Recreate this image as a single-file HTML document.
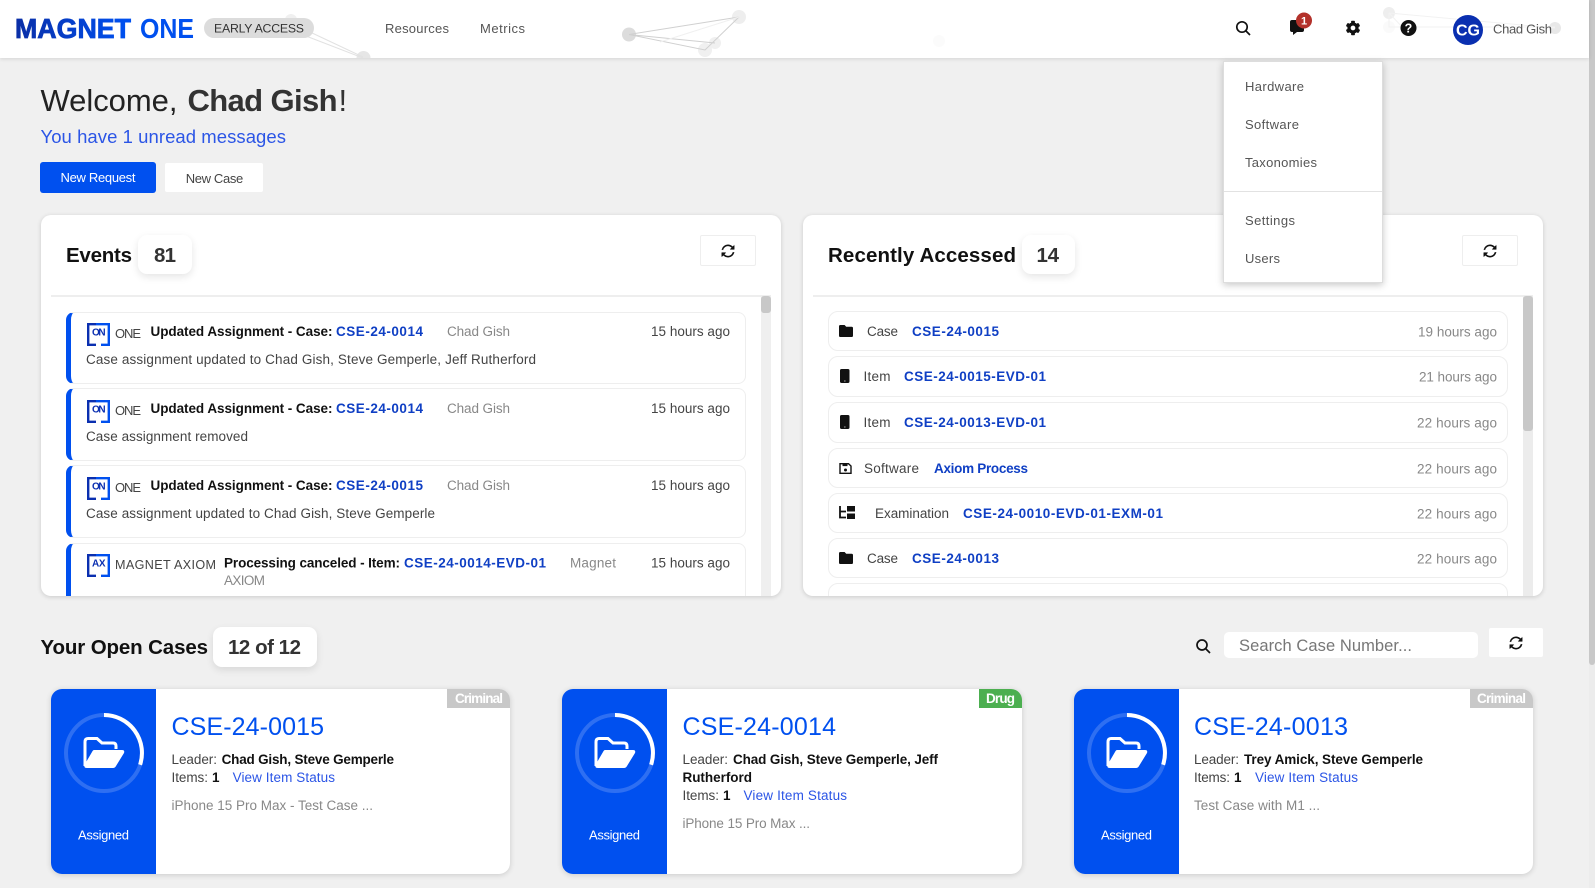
<!DOCTYPE html>
<html lang="en"><head><meta charset="utf-8"><title>Magnet One</title>
<style>
html,body{margin:0;padding:0;width:1595px;height:888px;overflow:hidden;background:#f0f0f0;font-family:"Liberation Sans",sans-serif}
.b{position:absolute;box-sizing:border-box}
.panel{background:#fff;border-radius:10px;box-shadow:0 1px 5px rgba(0,0,0,.16);overflow:hidden;width:740px;height:381px;top:215px}
.badge{background:#fff;border-radius:9px;box-shadow:0 3px 8px rgba(0,0,0,.1)}
.ev{left:25px;width:680px;background:#fff;border:1.5px solid #eee;border-left:5px solid #0050ef;border-radius:8px}
.rc{left:25px;width:680px;background:#fff;border:1.5px solid #eee;border-radius:10px}
.btn{background:#fff;border:1px solid #eee;border-radius:2px}
.card{background:#fff;top:689px;height:185px;border-radius:11px;box-shadow:0 1px 6px rgba(0,0,0,.16);overflow:hidden}
.blue{left:0;top:0;width:105px;height:185px;background:#0050ef}
.tag{top:0;right:0;height:19px}
svg{position:absolute;left:0;top:0}
text{font-family:"Liberation Sans",sans-serif;font-size:13.5px;fill:#555}
.bd{font-weight:700;fill:#111}
.lk{font-weight:700;fill:#0f3fc4}
.g{fill:#888}
.d{fill:#444}
.bl{fill:#2b55e6}
.w{fill:#fff}
.sm{font-size:13px}
.h{font-size:20.5px;font-weight:700;fill:#111}
.n{font-size:20.5px;font-weight:700;fill:#333}
.ct{font-size:25px;fill:#0050ef}
.tg{font-weight:700;fill:#fff}
.ic{font-weight:700;font-size:10px;fill:#0a2fb0}
</style></head>
<body>
<!-- scrollbar -->
<div class="b" style="left:1589px;top:0;width:6px;height:888px;background:#ececec"></div>
<div class="b" style="left:1589px;top:0;width:6px;height:665px;background:#c8c8c8;border-radius:0 0 3px 3px"></div>

<!-- header -->
<div class="b" style="left:0;top:0;width:1589px;height:58px;background:#fff;box-shadow:0 1px 4px rgba(0,0,0,.12)"></div>

<!-- buttons -->
<div class="b" style="left:40px;top:162px;width:116px;height:31px;background:#0050ef;border-radius:3px"></div>
<div class="b" style="left:165px;top:163px;width:98px;height:29px;background:#fff;border-radius:2px"></div>

<!-- events panel -->
<div class="b panel" style="left:41px">
  <div class="b" style="left:10px;top:80px;width:720px;height:1.5px;background:#eee"></div>
  <div class="b" style="left:720px;top:81px;width:10px;height:300px;background:#efefef"></div>
  <div class="b" style="left:720px;top:81px;width:10px;height:17px;background:#c8c8c8;border-radius:3px"></div>
  <div class="b ev" style="top:97px;height:71.5px"></div>
  <div class="b ev" style="top:173px;height:72.5px"></div>
  <div class="b ev" style="top:250px;height:72.5px"></div>
  <div class="b ev" style="top:328px;height:72px"></div>
  <div class="b btn" style="left:659px;top:20px;width:56px;height:31px"></div>
</div>

<!-- recent panel -->
<div class="b panel" style="left:803px">
  <div class="b" style="left:10px;top:80px;width:720px;height:1.5px;background:#eee"></div>
  <div class="b" style="left:720px;top:81px;width:10px;height:300px;background:#ececec"></div>
  <div class="b" style="left:720px;top:81px;width:10px;height:135px;background:#c8c8c8;border-radius:3px"></div>
  <div class="b rc" style="top:96px;height:40px"></div>
  <div class="b rc" style="top:141px;height:41px"></div>
  <div class="b rc" style="top:187px;height:41px"></div>
  <div class="b rc" style="top:233px;height:40px"></div>
  <div class="b rc" style="top:278px;height:40px"></div>
  <div class="b rc" style="top:323px;height:40px"></div>
  <div class="b rc" style="top:368px;height:40px"></div>
  <div class="b btn" style="left:659px;top:20px;width:56px;height:31px"></div>
</div>

<!-- badges -->
<div class="b badge" style="left:138px;top:235px;width:54px;height:39px"></div>
<div class="b badge" style="left:1022px;top:235px;width:53px;height:39px"></div>
<div class="b badge" style="left:213px;top:627px;width:104px;height:40px"></div>

<!-- search / refresh -->
<div class="b" style="left:1224px;top:632px;width:254px;height:26px;background:#fff;border-radius:5px"></div>
<div class="b" style="left:1489px;top:628px;width:54px;height:29px;background:#fff;border-radius:2px"></div>

<!-- case cards -->
<div class="b card" style="left:51px;width:459px"><div class="b blue"></div><div class="b tag" style="width:63px;background:#c8c8c8"></div></div>
<div class="b card" style="left:562px;width:460px"><div class="b blue"></div><div class="b tag" style="width:43px;background:#4caf50"></div></div>
<div class="b card" style="left:1074px;width:459px"><div class="b blue"></div><div class="b tag" style="width:63px;background:#c8c8c8"></div></div>

<!-- dropdown -->
<div class="b" style="left:1223px;top:61px;width:160px;height:222px;background:#fff;border:1px solid #ddd;box-shadow:0 2px 7px rgba(0,0,0,.22)"></div>
<div class="b" style="left:1224px;top:191px;width:158px;height:1px;background:#e2e2e2"></div>

<svg width="1595" height="888" viewBox="0 0 1595 888" xmlns="http://www.w3.org/2000/svg">
<defs>
  <linearGradient id="lg" gradientUnits="userSpaceOnUse" x1="15" y1="0" x2="125" y2="0"><stop offset="0" stop-color="#0a2ea6"/><stop offset="1" stop-color="#0050ef"/></linearGradient>
  <clipPath id="hd"><rect x="0" y="0" width="1589" height="58"/></clipPath>
  <path id="sync" stroke="#fff" stroke-width="22" d="M370.72 133.28C339.458 104.008 298.888 87.962 255.848 88c-77.458.068-144.328 53.178-162.791 126.85-1.344 5.363-6.122 9.15-11.651 9.15H24.103c-7.498 0-13.194-6.807-11.807-14.176C33.933 94.924 134.813 8 256 8c66.448 0 126.791 26.136 171.315 68.685L463.03 40.97C478.149 25.851 504 36.559 504 57.941V192c0 13.255-10.745 24-24 24H345.941c-21.382 0-32.09-25.851-16.971-40.971l41.75-41.749zM32 296h134.059c21.382 0 32.09 25.851 16.971 40.971l-41.75 41.75c31.262 29.273 71.835 45.319 114.876 45.28 77.418-.07 144.315-53.144 162.787-126.849 1.344-5.363 6.122-9.15 11.651-9.15h57.304c7.498 0 13.194 6.807 11.807 14.176C478.067 417.076 377.187 504 256 504c-66.448 0-126.791-26.136-171.315-68.685L48.97 471.03C33.851 486.149 8 475.441 8 454.059V320c0-13.255 10.745-24 24-24z"/>
  <g id="brk" fill="none" stroke-width="2.4"><path d="M9 1.2H1.2V21.8H9" stroke="#0a2fb0"/><path d="M9 1.2H21.8V21.8H14" stroke="#0050ef"/></g>
  <path id="fld" d="M1.4 0H5.6L7.2 1.8H12.6Q14 1.8 14 3.2V10.6Q14 12 12.6 12H1.4Q0 12 0 10.6V1.4Q0 0 1.4 0Z" fill="#111"/>
  <g id="ph"><rect x="0" y="0" width="9.5" height="14" rx="1.6" fill="#111"/><rect x="4" y="11.4" width="1.6" height="1.2" fill="#888"/></g>
  <g id="ring"><circle cx="104" cy="753" r="38" fill="none" stroke="#fff" stroke-opacity=".18" stroke-width="4"/>
    <path d="M104 715A38 38 0 0 1 140.1 764.7" fill="none" stroke="#fff" stroke-width="4"/>
    <path d="M85 766V742Q85 738.5 88 738.5H97L102 743H113Q116 743 116 746V749" fill="none" stroke="#fff" stroke-width="3"/>
    <path d="M94 750H122Q125 750 124 753L116 766Q115 768 113 768H87Q83 768 85 764L92 752Q93 750 94 750Z" fill="#fff"/>
  </g>
</defs>

<!-- network decoration -->
<g clip-path="url(#hd)">
  <circle cx="291" cy="20" r="6" fill="#f0f0f0"/>
  <circle cx="363.5" cy="58" r="7" fill="#e6e6e6"/>
  <path d="M310 32L363 57M306 36L363 58" stroke="#e2e2e2" stroke-width="1" fill="none"/>
  <circle cx="629" cy="34.5" r="7" fill="#dcdcdc"/><circle cx="739" cy="17" r="7" fill="#eee"/><circle cx="715" cy="43" r="6" fill="#f0f0f0"/><circle cx="705" cy="50" r="7" fill="#f0f0f0"/>
  <path d="M629 34.5L739 17M629 34.5L715 43M629 34.5L705 50L739 17" stroke="#d0d0d0" stroke-width="1" fill="none"/>
  <path d="M660 42L739 17" stroke="#f0f0f0" stroke-width="1" fill="none"/>
  <circle cx="939" cy="41" r="6" fill="#fbfbfb"/>
  <circle cx="1389" cy="13" r="6" fill="#eee"/><circle cx="1389" cy="27" r="6" fill="#fafafa"/><circle cx="1555" cy="28" r="6" fill="#e8e8e8"/>
  <path d="M1389 13L1555 28M1389 13V27H1555M1389 13L1405 30" stroke="#f2f2f2" stroke-width="1" fill="none"/>
</g>

<!-- logo & nav -->
<text x="15" y="38" textLength="116" lengthAdjust="spacingAndGlyphs" style="font-size:27.5px;font-weight:700;fill:url(#lg);stroke:url(#lg);stroke-width:.8">MAGNET</text>
<text x="140" y="38" textLength="54" lengthAdjust="spacingAndGlyphs" style="font-size:27.5px;font-weight:700;fill:#0050ef">ONE</text>
<rect x="204" y="18" width="110" height="20" rx="10" fill="#dcdcdc"/>
<text x="214" y="32.5" textLength="90" style="fill:#333;font-size:12.3px">EARLY ACCESS</text>
<text x="385" y="33" textLength="64" class="sm">Resources</text>
<text x="480" y="33" textLength="45" class="sm">Metrics</text>

<!-- header icons -->
<g fill="none" stroke="#111" stroke-width="1.7"><circle cx="1242" cy="27" r="5.2"/><path d="M1246 31L1250 35"/></g>
<path d="M1292 20H1302Q1304 20 1304 22V30Q1304 32 1302 32H1297L1293 35V32H1292Q1290 32 1290 30V22Q1290 20 1292 20Z" fill="#111"/>
<circle cx="1304" cy="20.5" r="8" fill="#b3312a"/>
<text x="1304" y="24.5" text-anchor="middle" class="tg" style="font-size:11px">1</text>
<g transform="translate(1345.5 20.5) scale(.0293)"><path fill="#111" d="M487.4 315.7l-42.6-24.6c4.3-23.2 4.3-47 0-70.2l42.6-24.6c4.9-2.8 7.1-8.6 5.5-14-11.1-35.6-30-67.8-54.7-94.6-3.8-4.1-10-5.1-14.8-2.3L380.8 110c-17.9-15.4-38.5-27.3-60.8-35.1V25.8c0-5.6-3.9-10.5-9.4-11.7-36.7-8.2-74.3-7.8-109.2 0-5.5 1.2-9.4 6.1-9.4 11.7V75c-22.2 7.9-42.8 19.8-60.8 35.1L88.7 85.5c-4.9-2.8-11-1.9-14.8 2.3-24.7 26.7-43.6 58.9-54.7 94.6-1.7 5.4.6 11.2 5.5 14L67.3 221c-4.3 23.2-4.3 47 0 70.2l-42.6 24.6c-4.9 2.8-7.1 8.6-5.5 14 11.1 35.6 30 67.8 54.7 94.6 3.8 4.1 10 5.1 14.8 2.3l42.6-24.6c17.9 15.4 38.5 27.3 60.8 35.1v49.2c0 5.6 3.9 10.5 9.4 11.7 36.7 8.2 74.3 7.8 109.2 0 5.5-1.2 9.4-6.1 9.4-11.7v-49.2c22.2-7.9 42.8-19.8 60.8-35.1l42.6 24.6c4.9 2.8 11 1.9 14.8-2.3 24.7-26.7 43.6-58.9 54.7-94.6 1.5-5.5-.7-11.3-5.6-14.1zM256 336c-44.1 0-80-35.9-80-80s35.9-80 80-80 80 35.9 80 80-35.9 80-80 80z"/></g>
<circle cx="1408.5" cy="28" r="8" fill="#111"/>
<text x="1408.5" y="32.5" text-anchor="middle" class="tg" style="font-size:12.5px">?</text>
<circle cx="1468" cy="30" r="15" fill="#0a2fb0"/>
<text x="1468" y="35.5" text-anchor="middle" class="tg" style="font-size:16px">CG</text>
<text x="1493" y="33.5" textLength="59" class="sm">Chad Gish</text>

<!-- dropdown text -->
<text x="1245" y="91" textLength="59" class="sm">Hardware</text>
<text x="1245" y="129" textLength="54" class="sm">Software</text>
<text x="1245" y="167" textLength="72" class="sm">Taxonomies</text>
<text x="1245" y="225" textLength="50" class="sm">Settings</text>
<text x="1245" y="263" textLength="35" class="sm">Users</text>

<!-- welcome -->
<text x="40.5" y="111" textLength="137" style="font-size:31px;fill:#222">Welcome,</text>
<text x="187.5" y="111" textLength="150" style="font-size:31px;font-weight:700;fill:#333">Chad Gish</text>
<text x="338.5" y="111" style="font-size:31px;fill:#333">!</text>
<text x="40.5" y="143" textLength="245.5" style="font-size:18.5px;fill:#2b55e6">You have 1 unread messages</text>
<text x="60.5" y="182" textLength="75" class="w sm">New Request</text>
<text x="185.7" y="183" textLength="57.5" class="d sm">New Case</text>

<!-- panel headers -->
<text x="66" y="262" textLength="66" class="h">Events</text>
<text x="154" y="262" textLength="22" class="n">81</text>
<text x="828" y="262" textLength="188" class="h">Recently Accessed</text>
<text x="1036.5" y="262" textLength="22.5" class="n">14</text>
<use href="#sync" transform="translate(721 244) scale(.0273)" fill="#111"/>
<use href="#sync" transform="translate(1483 244) scale(.0273)" fill="#111"/>

<!-- events rows -->
<use href="#brk" x="87" y="323"/><text x="92" y="335.7" textLength="13.6" class="ic">ON</text>
<text x="115" y="338" textLength="26" class="d sm">ONE</text>
<text x="150.5" y="336" textLength="182" class="bd">Updated Assignment - Case:</text>
<text x="336" y="336" textLength="87" class="lk">CSE-24-0014</text>
<text x="447" y="336" textLength="63" class="g">Chad Gish</text>
<text x="651" y="336" textLength="79" class="d">15 hours ago</text>
<text x="86" y="364" textLength="450" class="d">Case assignment updated to Chad Gish, Steve Gemperle, Jeff Rutherford</text>

<use href="#brk" x="87" y="400"/><text x="92" y="412.7" textLength="13.6" class="ic">ON</text>
<text x="115" y="415" textLength="26" class="d sm">ONE</text>
<text x="150.5" y="413" textLength="182" class="bd">Updated Assignment - Case:</text>
<text x="336" y="413" textLength="87" class="lk">CSE-24-0014</text>
<text x="447" y="413" textLength="63" class="g">Chad Gish</text>
<text x="651" y="413" textLength="79" class="d">15 hours ago</text>
<text x="86" y="441" textLength="162" class="d">Case assignment removed</text>

<use href="#brk" x="87" y="477"/><text x="92" y="489.7" textLength="13.6" class="ic">ON</text>
<text x="115" y="492" textLength="26" class="d sm">ONE</text>
<text x="150.5" y="490" textLength="182" class="bd">Updated Assignment - Case:</text>
<text x="336" y="490" textLength="87" class="lk">CSE-24-0015</text>
<text x="447" y="490" textLength="63" class="g">Chad Gish</text>
<text x="651" y="490" textLength="79" class="d">15 hours ago</text>
<text x="86" y="518" textLength="349" class="d">Case assignment updated to Chad Gish, Steve Gemperle</text>

<use href="#brk" x="87" y="554"/><text x="92" y="566.7" textLength="13.6" class="ic">AX</text>
<text x="115" y="569" textLength="101" class="d" style="font-size:12.6px">MAGNET AXIOM</text>
<text x="224" y="567.4" textLength="176" class="bd">Processing canceled - Item:</text>
<text x="404" y="567.4" textLength="142" class="lk">CSE-24-0014-EVD-01</text>
<text x="570" y="567.4" textLength="46" class="g">Magnet</text>
<text x="651" y="567.4" textLength="79" class="d">15 hours ago</text>
<text x="224" y="585" textLength="41" class="g">AXIOM</text>

<!-- recent rows -->
<use href="#fld" x="839" y="325"/>
<text x="867" y="336" textLength="31" class="d">Case</text><text x="912" y="336" textLength="87" class="lk">CSE-24-0015</text>
<text x="1418" y="336.5" textLength="79" class="g">19 hours ago</text>

<use href="#ph" x="840" y="369"/>
<text x="863.5" y="381" textLength="27" class="d">Item</text><text x="904" y="381" textLength="142" class="lk">CSE-24-0015-EVD-01</text>
<text x="1419" y="381.5" textLength="78" class="g">21 hours ago</text>

<use href="#ph" x="840" y="415"/>
<text x="863.5" y="427" textLength="27" class="d">Item</text><text x="904" y="427" textLength="142" class="lk">CSE-24-0013-EVD-01</text>
<text x="1417" y="427.5" textLength="80" class="g">22 hours ago</text>

<g fill="none" stroke="#111" stroke-width="1.4"><path d="M840 463.7H848.5L851 466V473.3H840Z"/></g>
<rect x="842.5" y="463.5" width="5" height="2.6" fill="#111"/><circle cx="845.5" cy="470" r="1.5" fill="#111"/>
<text x="864" y="473" textLength="55" class="d">Software</text><text x="934" y="473" textLength="94" class="lk">Axiom Process</text>
<text x="1417" y="473.5" textLength="80" class="g">22 hours ago</text>

<path d="M840 506V517.5H846M840 511.5H846" fill="none" stroke="#111" stroke-width="1.8"/>
<rect x="847" y="506" width="8" height="5.5" fill="#111"/><rect x="847" y="513.5" width="8" height="5.5" fill="#111"/>
<text x="875" y="518" textLength="74" class="d">Examination</text><text x="963" y="518" textLength="200" class="lk">CSE-24-0010-EVD-01-EXM-01</text>
<text x="1417" y="518.5" textLength="80" class="g">22 hours ago</text>

<use href="#fld" x="839" y="552"/>
<text x="867" y="563" textLength="31" class="d">Case</text><text x="912" y="563" textLength="87" class="lk">CSE-24-0013</text>
<text x="1417" y="563.5" textLength="80" class="g">22 hours ago</text>

<!-- open cases header -->
<text x="40.5" y="654" textLength="167.5" class="h">Your Open Cases</text>
<text x="228" y="654" textLength="73" class="n">12 of 12</text>
<g fill="none" stroke="#111" stroke-width="1.7"><circle cx="1202" cy="645" r="5"/><path d="M1206 649L1210 653"/></g>
<text x="1239" y="651" textLength="173" style="font-size:16.5px;fill:#777">Search Case Number...</text>
<use href="#sync" transform="translate(1509 636) scale(.0273)" fill="#111"/>

<!-- card 1 -->
<use href="#ring"/>
<text x="78" y="839.5" textLength="51" class="w sm">Assigned</text>
<text x="455" y="703" textLength="48" class="tg">Criminal</text>
<text x="171.5" y="735" textLength="152.5" class="ct">CSE-24-0015</text>
<text x="171.5" y="764" textLength="45.5" class="d">Leader:</text>
<text x="221.6" y="764" textLength="172.4" class="bd">Chad Gish, Steve Gemperle</text>
<text x="171.5" y="782" textLength="36.5" class="d">Items:</text>
<text x="212" y="782" class="bd">1</text>
<text x="232.6" y="782" textLength="102.4" class="bl">View Item Status</text>
<text x="171.5" y="810" textLength="201.5" class="g">iPhone 15 Pro Max - Test Case ...</text>

<!-- card 2 -->
<use href="#ring" x="511"/>
<text x="589" y="839.5" textLength="51" class="w sm">Assigned</text>
<text x="986" y="703" textLength="29" class="tg">Drug</text>
<text x="682.5" y="735" textLength="153.5" class="ct">CSE-24-0014</text>
<text x="682.5" y="764" textLength="45.5" class="d">Leader:</text>
<text x="733" y="764" textLength="205" class="bd">Chad Gish, Steve Gemperle, Jeff</text>
<text x="682.5" y="782" textLength="69.5" class="bd">Rutherford</text>
<text x="682.5" y="800" textLength="36.5" class="d">Items:</text>
<text x="723" y="800" class="bd">1</text>
<text x="743.5" y="800" textLength="103.5" class="bl">View Item Status</text>
<text x="682.5" y="828" textLength="127.5" class="g">iPhone 15 Pro Max ...</text>

<!-- card 3 -->
<use href="#ring" x="1023"/>
<text x="1101" y="839.5" textLength="51" class="w sm">Assigned</text>
<text x="1477" y="703" textLength="49" class="tg">Criminal</text>
<text x="1194" y="735" textLength="154" class="ct">CSE-24-0013</text>
<text x="1194" y="764" textLength="45" class="d">Leader:</text>
<text x="1244" y="764" textLength="179" class="bd">Trey Amick, Steve Gemperle</text>
<text x="1194" y="782" textLength="36" class="d">Items:</text>
<text x="1234" y="782" class="bd">1</text>
<text x="1255" y="782" textLength="103" class="bl">View Item Status</text>
<text x="1194" y="810" textLength="126" class="g">Test Case with M1 ...</text>
</svg>
</body></html>
